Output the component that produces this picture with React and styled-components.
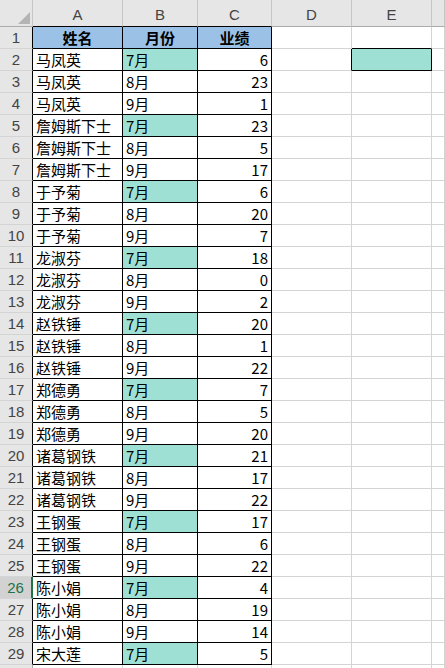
import React from 'react'
import styled, { createGlobalStyle } from 'styled-components';

const GlobalStyle = createGlobalStyle`
  body {
    margin: 0;
    background: #ffffff;
    overflow: hidden;
    font-family: "Noto Sans CJK SC", "Liberation Sans", sans-serif;
  }
`;

const rows = [
  ['马凤英', '7月', 6], ['马凤英', '8月', 23], ['马凤英', '9月', 1],
  ['詹姆斯下士', '7月', 23], ['詹姆斯下士', '8月', 5], ['詹姆斯下士', '9月', 17],
  ['于予菊', '7月', 6], ['于予菊', '8月', 20], ['于予菊', '9月', 7],
  ['龙淑芬', '7月', 18], ['龙淑芬', '8月', 0], ['龙淑芬', '9月', 2],
  ['赵铁锤', '7月', 20], ['赵铁锤', '8月', 1], ['赵铁锤', '9月', 22],
  ['郑德勇', '7月', 7], ['郑德勇', '8月', 5], ['郑德勇', '9月', 20],
  ['诸葛钢铁', '7月', 21], ['诸葛钢铁', '8月', 17], ['诸葛钢铁', '9月', 22],
  ['王钢蛋', '7月', 17], ['王钢蛋', '8月', 6], ['王钢蛋', '9月', 22],
  ['陈小娟', '7月', 4], ['陈小娟', '8月', 19], ['陈小娟', '9月', 14],
  ['宋大莲', '7月', 5],
];

const cols = ['A', 'B', 'C', 'D', 'E', ''];

function App() {
  return (
    <>
      <GlobalStyle />
      <Sheet>
        <Corner><Triangle /></Corner>
        {cols.map((c, i) => (
          <ColHead key={c + i} $dark={i < 3}>{c}</ColHead>
        ))}

        <RowHead $edge>1</RowHead>
        <Cell $fill="#9bc2e6" $black $bold $align="center">姓名</Cell>
        <Cell $fill="#9bc2e6" $black $bold $align="center">月份</Cell>
        <Cell $fill="#9bc2e6" $black $bold $align="center">业绩</Cell>
        <Cell />
        <Cell $blackBottom />
        <Cell />

        {rows.map((r, i) => {
          const n = i + 2;
          return (
            <React.Fragment key={n}>
              <RowHead $edge $selected={n === 26}>{n}</RowHead>
              <Cell $black>{r[0]}</Cell>
              <Cell $black $fill={r[1] === '7月' ? '#9fe0d5' : undefined}>{r[1]}</Cell>
              <Cell $black $align="right">{r[2]}</Cell>
              <Cell $blackRight={n === 2} />
              {n === 2 ? <Cell $black $fill="#9fe0d5" /> : <Cell />}
              <Cell />
            </React.Fragment>
          );
        })}

        {/* row 30 only peeks in at the bottom edge */}
        <RowHead />
        <Cell />
        <Cell />
        <Cell />
        <Cell />
        <Cell />
        <Cell />
      </Sheet>
    </>
  );
}

const Sheet = styled.div`
  display: grid;
  grid-template-columns: 33px 90px 75px 74px 80px 80px 1fr;
  grid-template-rows: 27px repeat(30, 22px);
  width: 445px;
  height: 668px;
  overflow: hidden;
`;

const Corner = styled.div`
  background: #e6e6e6;
  border-right: 1px solid #c6c6c6;
  border-bottom: 1px solid #ababab;
  display: flex;
  align-items: flex-end;
  justify-content: flex-end;
  padding: 0 2px 2px 0;
`;

const Triangle = styled.div`
  width: 0;
  height: 0;
  border-left: 12px solid transparent;
  border-bottom: 12px solid #b4b4b4;
`;

const ColHead = styled.div`
  background: #e6e6e6;
  color: #444444;
  font-family: "Liberation Sans", sans-serif;
  font-size: 15px;
  display: flex;
  align-items: center;
  justify-content: center;
  padding-top: 2px;
  border-right: 1px solid #c6c6c6;
  border-bottom: 1px solid ${p => (p.$dark ? '#000000' : '#ababab')};
`;

const RowHead = styled.div`
  background: ${p => (p.$selected ? '#d2d2d2' : '#e6e6e6')};
  color: ${p => (p.$selected ? '#217346' : '#444444')};
  font-family: "Liberation Sans", sans-serif;
  font-size: 15px;
  display: flex;
  align-items: center;
  justify-content: center;
  border-bottom: 1px solid #d4d4d4;
  border-right: ${p => (p.$selected ? '2px solid #217346' : p.$edge ? '1px solid #000000' : '1px solid #ababab')};
`;

const Cell = styled.div`
  background: ${p => p.$fill || '#ffffff'};
  color: #000000;
  font-size: 15px;
  font-weight: ${p => (p.$bold ? 700 : 400)};
  display: flex;
  align-items: center;
  justify-content: ${p => (p.$align === 'right' ? 'flex-end' : p.$align === 'center' ? 'center' : 'flex-start')};
  padding: 0 3px;
  white-space: nowrap;
  overflow: hidden;
  border-right: 1px solid ${p => (p.$black || p.$blackRight ? '#000000' : '#d4d4d4')};
  border-bottom: 1px solid ${p => (p.$black || p.$blackBottom ? '#000000' : '#d4d4d4')};
`;

export default App;
